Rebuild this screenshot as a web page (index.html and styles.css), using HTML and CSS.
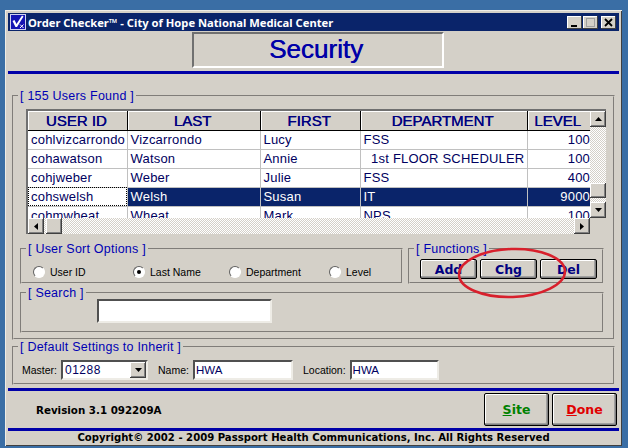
FILE: index.html
```html
<!DOCTYPE html>
<html lang="en">
<head>
  <meta charset="UTF-8">
  <title>Order Checker - Security</title>
  <link rel="stylesheet" href="styles.css">
</head>
<body>
  <div class="window">
    <div class="titlebar">
      <svg class="app-icon" width="16" height="16" viewBox="0 0 16 16">
        <rect x="0.5" y="0.5" width="15" height="15" fill="#1414b4" stroke="#d0d0f0"/>
        <path d="M2.5 7 L4.5 6 L6.5 10 L12 1.5 L13.5 2.5 L7 13 L5.5 13 Z" fill="#fff"/>
        <path d="M10 10.5 L13.5 14 M13.5 10.5 L10 14" stroke="#fff" stroke-width="1"/>
      </svg>
      <span class="title-text">Order Checker™ - City of Hope National Medical Center</span>
      <div class="win-buttons">
        <div class="win-btn">
          <svg width="15" height="13" viewBox="0 0 15 13"><rect x="4" y="9" width="6" height="2" fill="#000"/></svg>
        </div>
        <div class="win-btn">
          <svg width="15" height="13" viewBox="0 0 15 13"><rect x="3.5" y="2.5" width="8" height="8" fill="none" stroke="#a0a0a0"/><rect x="3" y="2" width="9" height="1" fill="#a0a0a0"/></svg>
        </div>
        <div class="win-btn gap">
          <svg width="15" height="13" viewBox="0 0 15 13"><path d="M4 3 L11 10 M11 3 L4 10" stroke="#000" stroke-width="1.8"/></svg>
        </div>
      </div>
    </div>

    <div class="page-head">
      <h1 class="page-title">Security</h1>
    </div>
    <div class="blue-rule"></div>

    <fieldset class="group users">
      <legend>[ 155 Users Found ]</legend>
      <div class="grid-view">
        <div class="table-clip">
          <table class="user-table">
            <colgroup>
              <col class="col-id"><col class="col-last"><col class="col-first"><col class="col-dept"><col class="col-level">
            </colgroup>
            <thead>
              <tr><th>USER ID</th><th>LAST</th><th>FIRST</th><th>DEPARTMENT</th><th>LEVEL</th></tr>
            </thead>
            <tbody>
              <tr><td>cohlvizcarrondo</td><td>Vizcarrondo</td><td>Lucy</td><td>FSS</td><td class="num">100</td></tr>
              <tr><td>cohawatson</td><td>Watson</td><td>Annie</td><td>&nbsp;&nbsp;1st FLOOR SCHEDULER</td><td class="num">100</td></tr>
              <tr><td>cohjweber</td><td>Weber</td><td>Julie</td><td>FSS</td><td class="num">400</td></tr>
              <tr class="selected"><td class="focus">cohswelsh</td><td>Welsh</td><td>Susan</td><td>IT</td><td class="num">9000</td></tr>
              <tr><td>cohmwheat</td><td>Wheat</td><td>Mark</td><td>NPS</td><td class="num">100</td></tr>
            </tbody>
          </table>
        </div>
        <div class="vscroll">
          <div class="sb-btn">
            <svg width="7" height="4" viewBox="0 0 7 4"><path d="M3.5 0 L7 4 L0 4 Z"/></svg>
          </div>
          <div class="sb-thumb v-thumb"></div>
          <div class="sb-btn down">
            <svg width="7" height="4" viewBox="0 0 7 4"><path d="M0 0 L7 0 L3.5 4 Z"/></svg>
          </div>
        </div>
        <div class="hscroll">
          <div class="sb-btn">
            <svg width="4" height="7" viewBox="0 0 4 7"><path d="M4 0 L4 7 L0 3.5 Z"/></svg>
          </div>
          <div class="sb-thumb h-thumb"></div>
          <div class="sb-btn right">
            <svg width="4" height="7" viewBox="0 0 4 7"><path d="M0 0 L4 3.5 L0 7 Z"/></svg>
          </div>
        </div>
        <div class="corner"></div>
      </div>

      <div class="options-row">
        <fieldset class="group sort">
          <legend>[ User Sort Options ]</legend>
          <div class="radios">
            <label class="radio r1"><span class="dot"></span>User ID</label>
            <label class="radio r2"><span class="dot on"></span>Last Name</label>
            <label class="radio r3"><span class="dot"></span>Department</label>
            <label class="radio"><span class="dot"></span>Level</label>
          </div>
        </fieldset>
        <fieldset class="group functions">
          <legend>[ Functions ]</legend>
          <div class="func-buttons">
            <button class="btn">Add</button>
            <button class="btn">Chg</button>
            <button class="btn">Del</button>
          </div>
        </fieldset>
      </div>

      <fieldset class="group search">
        <legend>[ Search ]</legend>
        <div class="text-box search-box"></div>
      </fieldset>
    </fieldset>

    <fieldset class="group defaults">
      <legend>[ Default Settings to Inherit ]</legend>
      <div class="defaults-row">
        <span class="lbl">Master:</span>
        <div class="text-box combo">
          <span class="combo-val">01288</span>
          <div class="sb-btn combo-btn">
            <svg width="7" height="4" viewBox="0 0 7 4"><path d="M0 0 L7 0 L3.5 4 Z"/></svg>
          </div>
        </div>
        <span class="lbl name-lbl">Name:</span>
        <div class="text-box name-box">HWA</div>
        <span class="lbl loc-lbl">Location:</span>
        <div class="text-box loc-box">HWA</div>
      </div>
    </fieldset>
    <div class="blue-rule rule-mid"></div>

    <div class="footer-row">
      <span class="revision">Revision 3.1 092209A</span>
      <div class="footer-buttons">
        <button class="big-btn site"><u>S</u>ite</button>
        <button class="big-btn done"><u>D</u>one</button>
      </div>
    </div>
    <div class="blue-rule"></div>
    <div class="copyright">Copyright© 2002 - 2009 Passport Health Communications, Inc. All Rights Reserved</div>

    <svg class="red-circle" width="116" height="58" viewBox="0 0 116 58">
      <ellipse cx="58" cy="29" rx="53" ry="24" fill="none" stroke="#d8202c" stroke-width="2.5" transform="rotate(-2 58 29)"/>
    </svg>
  </div>
</body>
</html>
```
FILE: styles.css
```css
* {
  box-sizing: border-box;
}
body {
  margin: 0;
  width: 628px;
  height: 448px;
  overflow: hidden;
  background-color: #3a6ea5;
  font-family: "Liberation Sans", Arial, sans-serif;
  padding: 10px 6px 2px 5px;
}
.window {
  position: relative;
  height: 436px;
  background-color: #d4d0c8;
  padding: 3px;
  box-shadow: inset 1px 1px 0 #eeece6, inset -1px -1px 0 #404040;
}

/* title bar */
.titlebar {
  height: 18px;
  background-color: #0a246a;
  display: flex;
  align-items: center;
  padding-left: 2px;
}
.app-icon {
  flex: none;
}
.title-text {
  margin-left: 2px;
  color: #fff;
  font-family: "Noto Sans", sans-serif;
  font-weight: bold;
  font-size: 11.2px;
  white-space: nowrap;
}
.win-buttons {
  margin-left: auto;
  display: flex;
  gap: 1px;
  padding-right: 3px;
}
.win-btn {
  width: 15px;
  height: 13px;
  background-color: #d4d0c8;
  box-shadow: inset -1px -1px 0 #404040, inset 1px 1px 0 #fff;
  display: flex;
}
.win-btn.gap {
  margin-left: 2px;
}

/* heading */
.page-head {
  height: 40px;
  padding: 1px 0 0 184px;
}
.page-title {
  margin: 0;
  width: 252px;
  height: 36px;
  padding-right: 4px;
  border: 2px solid;
  border-color: #707070 #fff #fff #707070;
  color: #0000a8;
  font-size: 26px;
  font-weight: normal;
  line-height: 31px;
  text-align: center;
  text-shadow: 0.5px 0 0 #0000a8;
}
.blue-rule {
  height: 3px;
  background-color: #0000a8;
}

/* group boxes */
.group {
  margin: 0;
  padding: 0;
  min-width: 0;
  border: 2px groove #d4d0c8;
}
.group legend {
  margin-left: 4px;
  padding: 0 2px;
  color: #0000b4;
  font-size: 12.5px;
  line-height: 14px;
  letter-spacing: 0.22px;
  white-space: nowrap;
}
.users {
  margin: 15px 4px 0 4px;
  height: 251px;
  padding: 6px 0 0 0;
}

/* user grid */
.grid-view {
  display: grid;
  grid-template-columns: 562px 16px;
  grid-template-rows: 107px 16px;
  width: 580px;
  height: 125px;
  margin-left: 12px;
  border-top: 2px solid #707070;
  border-left: 2px solid #707070;
  background-color: #d4d0c8;
}
.table-clip {
  overflow: hidden;
  background-color: #fff;
}
.user-table {
  width: 562px;
  table-layout: fixed;
  border-collapse: collapse;
  color: #000060;
  font-size: 13px;
}
.col-id { width: 99px; }
.col-last { width: 133px; }
.col-first { width: 100px; }
.col-dept { width: 167px; }
.col-level { width: 63px; }
.user-table th {
  height: 19px;
  padding: 0 2px 0 0;
  background-color: #d4d0c8;
  color: #000080;
  font-size: 15px;
  font-weight: normal;
  line-height: 17px;
  text-shadow: 0.4px 0 0 #000080;
  border-right: 1px solid #000;
  border-bottom: 1px solid #000;
  box-shadow: inset 1px 1px 0 #fff;
}
.user-table td {
  height: 19px;
  padding: 0 0 0 3px;
  border-right: 1px solid #c0c0c0;
  border-bottom: 1px solid #c0c0c0;
  white-space: nowrap;
  overflow: hidden;
  letter-spacing: 0.2px;
}
.user-table td.num {
  text-align: right;
  padding: 0;
  border-right: none;
}
.selected td {
  background-color: #0a246a;
  color: #fff;
}
.selected td.focus {
  background-color: #fff;
  color: #000060;
  outline: 1px dotted #000;
  outline-offset: -1px;
}

/* scrollbars */
.vscroll, .hscroll {
  display: flex;
  background: repeating-conic-gradient(#d4d0c8 0 25%, #fff 0 50%) 0 0 / 2px 2px;
}
.vscroll {
  flex-direction: column;
}
.sb-btn {
  width: 16px;
  height: 16px;
  flex: none;
  background-color: #d4d0c8;
  box-shadow: inset -1px -1px 0 #404040, inset 1px 1px 0 #fff, inset -2px -2px 0 #808080;
  display: flex;
  align-items: center;
  justify-content: center;
}
.sb-thumb {
  flex: none;
  background-color: #d4d0c8;
  box-shadow: inset -1px -1px 0 #404040, inset 1px 1px 0 #fff, inset -2px -2px 0 #808080;
}
.v-thumb {
  height: 15px;
  margin-top: 56px;
}
.sb-btn.down {
  margin-top: 4px;
}
.h-thumb {
  width: 16px;
  margin-left: 2px;
}
.sb-btn.right {
  margin-left: auto;
}
.corner {
  background-color: #d4d0c8;
}

/* sort + functions */
.options-row {
  display: flex;
  gap: 5px;
  width: 584px;
  margin: 8px 0 0 6px;
}
.sort {
  width: 383px;
  height: 42px;
}
.functions {
  width: 196px;
  height: 42px;
}
.radios {
  display: flex;
  padding: 10px 0 0 11px;
}
.radio {
  display: flex;
  align-items: center;
  gap: 5px;
  font-size: 10.5px;
  color: #000;
  white-space: nowrap;
}
.r1 { width: 100px; }
.r2 { width: 96px; }
.r3 { width: 100px; }
.dot {
  position: relative;
  width: 12px;
  height: 12px;
  border-radius: 50%;
  background-color: #fff;
  border: 1px solid;
  border-color: #606060 #fff #fff #606060;
}
.dot.on::after {
  content: "";
  position: absolute;
  left: 3px;
  top: 3px;
  width: 4px;
  height: 4px;
  border-radius: 50%;
  background-color: #000;
}
.func-buttons {
  display: flex;
  gap: 3px;
  padding: 3px 0 0 10px;
}
.btn, .big-btn {
  padding: 0;
  background-color: #d4d0c8;
  border: 1px solid #000;
  border-radius: 2px;
  box-shadow: inset -1px -1px 0 #808080, inset -2px -2px 0 #a0a0a0, inset 1px 1px 0 #fff;
  font-family: "DejaVu Sans", sans-serif;
  font-weight: bold;
}
.btn {
  width: 57px;
  height: 20px;
  color: #000080;
  font-size: 12.5px;
}
.search {
  width: 584px;
  height: 47px;
  margin: 2px 0 0 6px;
}
.text-box {
  height: 24px;
  background-color: #fff;
  border: 2px solid;
  border-color: #505050 #eeece6 #eeece6 #505050;
  color: #000060;
  font-size: 13px;
}
.search-box {
  width: 175px;
  margin: -1px 0 0 75px;
}

/* default settings */
.defaults {
  margin: 0 4px 0 4px;
  height: 45px;
}
.defaults-row {
  display: flex;
  align-items: center;
  padding: 6px 0 0 8px;
  font-size: 10.5px;
}
.lbl {
  color: #000;
  white-space: nowrap;
}
.combo {
  display: flex;
  justify-content: space-between;
  width: 87px;
  height: 20px;
  margin-left: 4px;
  line-height: 16px;
  padding-left: 2px;
  font-size: 12px;
  letter-spacing: 0.5px;
}
.combo-btn {
  height: 16px;
}
.name-lbl, .loc-lbl {
  margin-left: 10px;
}
.name-box, .loc-box {
  height: 20px;
  margin-left: 4px;
  line-height: 16px;
  font-size: 11.5px;
  padding-left: 1px;
}
.name-box {
  width: 100px;
}
.loc-box {
  width: 89px;
}
.rule-mid {
  margin-top: 3px;
}

/* footer */
.footer-row {
  height: 37px;
  display: flex;
  align-items: center;
  padding-left: 28px;
}
.revision {
  font-family: "DejaVu Sans", sans-serif;
  font-weight: bold;
  font-size: 10.3px;
  color: #000;
}
.footer-buttons {
  margin-left: auto;
  display: flex;
  gap: 3px;
  padding-right: 2px;
}
.big-btn {
  width: 65px;
  height: 33px;
  font-size: 12.5px;
}
.site { color: #008000; }
.done { color: #e00000; }
.copyright {
  height: 14px;
  font-family: "DejaVu Sans", sans-serif;
  font-weight: bold;
  font-size: 10.1px;
  line-height: 14px;
  text-align: center;
  color: #000;
}

/* the hand drawn mark over the buttons */
.red-circle {
  position: absolute;
  left: 449px;
  top: 234px;
}
```
